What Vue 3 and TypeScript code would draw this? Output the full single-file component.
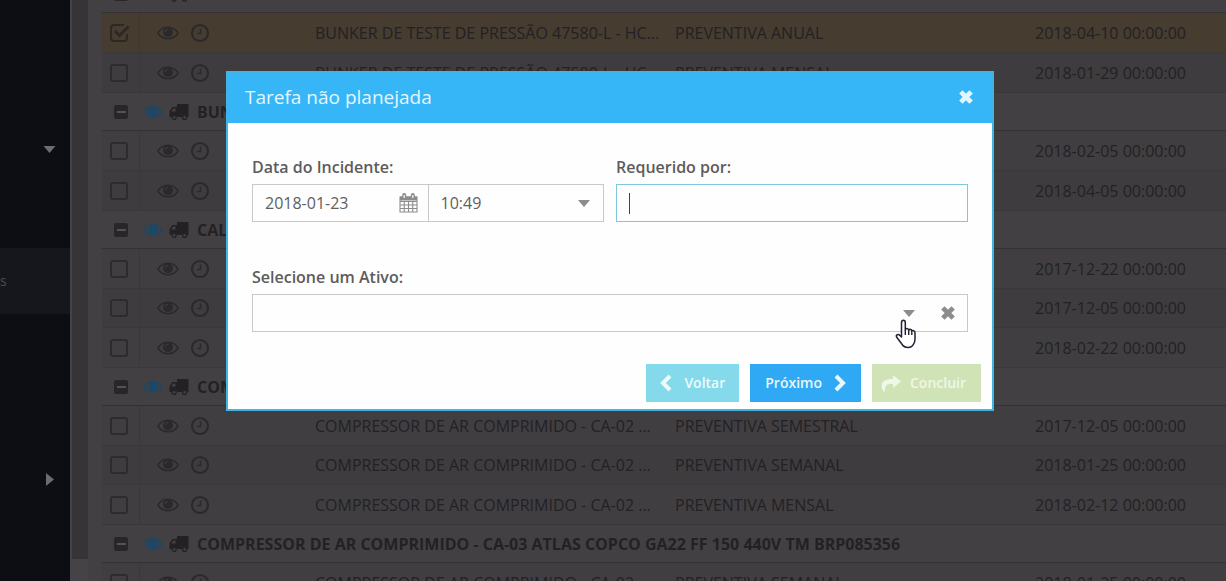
<script setup lang="ts">
import { onMounted, ref } from 'vue'

interface Task { id: number; name: string; type: string; date: string; checked: boolean }
interface Group { title: string; tasks: Task[] }

let nextId = 0
const task = (name: string, type: string, date: string, checked = false): Task => ({
  id: nextId++, name, type, date: `${date} 00:00:00`, checked,
})
const bunker = 'BUNKER DE TESTE DE PRESSÃO 47580-L - HC...'
const compressor = 'COMPRESSOR DE AR COMPRIMIDO - CA-02 ...'

const groups = ref<Group[]>([
  { title: '', tasks: [
    task(bunker, 'PREVENTIVA ANUAL', '2018-04-10', true),
    task(bunker, 'PREVENTIVA MENSAL', '2018-01-29'),
  ] },
  { title: 'BUN', tasks: [
    task('', '', '2018-02-05'),
    task('', '', '2018-04-05'),
  ] },
  { title: 'CAL', tasks: [
    task('', '', '2017-12-22'),
    task('', '', '2017-12-05'),
    task('', '', '2018-02-22'),
  ] },
  { title: 'COM', tasks: [
    task(compressor, 'PREVENTIVA SEMESTRAL', '2017-12-05'),
    task(compressor, 'PREVENTIVA SEMANAL', '2018-01-25'),
    task(compressor, 'PREVENTIVA MENSAL', '2018-02-12'),
  ] },
  { title: 'COMPRESSOR DE AR COMPRIMIDO - CA-03 ATLAS COPCO GA22 FF 150 440V TM BRP085356', tasks: [
    task(compressor, 'PREVENTIVA SEMANAL', '2018-01-25'),
  ] },
])

const date = ref('2018-01-23')
const time = ref('10:49')
const requester = ref('')
const asset = ref('')
const requesterInput = ref<HTMLInputElement | null>(null)
onMounted(() => requesterInput.value?.focus())
</script>

<template>
  <div class="page">
    <svg class="defs" aria-hidden="true">
      <symbol id="eye" viewBox="0 0 22 14">
        <path d="M1 7C5.500 -.6 16.500 -.6 21 7C16.500 14.600 5.500 14.600 1 7Z" fill="none" stroke="currentColor" stroke-width="1.500" />
        <circle cx="11" cy="6.300" r="5" fill="currentColor" />
        <path d="M8.300 6A2.800 2.800 0 0 1 11 3.300" fill="none" stroke="#413e41" stroke-width="1" />
      </symbol>
      <symbol id="clock" viewBox="0 0 20 20">
        <circle cx="10" cy="10" r="8" fill="none" stroke="currentColor" stroke-width="2.200" />
        <path d="M10.500 5.500V10.500H7" fill="none" stroke="currentColor" stroke-width="1.500" />
      </symbol>
      <symbol id="truck" viewBox="0 0 20 16">
        <path d="M8 0H19.500V13H18.300A2.700 2.700 0 0 0 13 13H7.800A2.700 2.700 0 0 0 2.500 13H.5V7L3.500 3H8ZM2.200 7.500H6.500V4.500H4.300Z" fill="currentColor" fill-rule="evenodd" />
        <circle cx="5.100" cy="13.400" r="2" fill="none" stroke="currentColor" stroke-width="1.200" />
        <circle cx="15.600" cy="13.400" r="2" fill="none" stroke="currentColor" stroke-width="1.200" />
      </symbol>
      <symbol id="cross" viewBox="0 0 14 14">
        <path d="M2.500 2.500L11.500 11.500M11.500 2.500L2.500 11.500" stroke="currentColor" stroke-width="4.200" />
      </symbol>
      <symbol id="down" viewBox="0 0 12 7"><path d="M0 0H12L6 7Z" fill="currentColor" /></symbol>
    </svg>

    <nav class="sidebar" aria-label="Menu">
      <button class="branch" type="button" aria-label="Recolher"><svg width="13" height="7"><use href="#down" /></svg></button>
      <a class="current" href="#">s</a>
      <button class="branch closed" type="button" aria-label="Expandir"><svg width="8" height="13" viewBox="0 0 8 13"><path d="M0 0L8 6.500L0 13Z" fill="currentColor" /></svg></button>
    </nav>
    <div class="gutter"><div class="thumb"></div></div>

    <main class="list">
      <table>
        <colgroup><col class="c-check"><col class="c-tools"><col class="c-name"><col class="c-type"><col></colgroup>
        <tbody v-for="(group, g) in groups" :key="g">
          <tr class="group">
            <td class="check"><button class="fold" type="button" aria-label="Recolher grupo"></button></td>
            <td colspan="4">
              <div class="heading">
                <svg class="seen" width="20" height="14"><use href="#eye" /></svg>
                <svg width="20" height="16"><use href="#truck" /></svg>
                <span>{{ group.title }}</span>
              </div>
            </td>
          </tr>
          <tr v-for="t in group.tasks" :key="t.id" :class="{ selected: t.checked }">
            <td class="check edge"><input v-model="t.checked" type="checkbox" :aria-label="t.date"></td>
            <td>
              <div class="tools">
                <svg width="22" height="14"><use href="#eye" /></svg>
                <svg width="20" height="20"><use href="#clock" /></svg>
              </div>
            </td>
            <td class="text">{{ t.name }}</td>
            <td class="text">{{ t.type }}</td>
            <td class="text">{{ t.date }}</td>
          </tr>
        </tbody>
      </table>
    </main>

    <div class="overlay">
      <section class="dialog" role="dialog" aria-labelledby="dialog-title">
        <header>
          <h2 id="dialog-title">Tarefa não planejada</h2>
          <button class="icon" type="button" aria-label="Fechar"><svg width="16" height="16"><use href="#cross" /></svg></button>
        </header>
        <form @submit.prevent>
          <div class="row">
            <div class="field">
              <label for="date">Data do Incidente:</label>
              <div class="pair">
                <div class="box">
                  <input id="date" v-model="date" type="text">
                  <button class="icon" type="button" aria-label="Calendário">
                    <svg width="19" height="20" viewBox="0 0 19 20">
                      <path d="M1 4H18V19H1ZM1 8.500H18M1 12H18M1 15.500H18M5.250 8V19M9.500 8V19M13.750 8V19" fill="none" stroke="currentColor" stroke-width="1.100" />
                      <path d="M1 3.500H18V7.500H1Z" fill="currentColor" />
                      <path d="M5.200 2V5M13.800 2V5" stroke="currentColor" stroke-width="4" stroke-linecap="round" />
                      <path d="M5.200 2V5M13.800 2V5" stroke="#fff" stroke-width="1.200" />
                    </svg>
                  </button>
                </div>
                <div class="box">
                  <select v-model="time" aria-label="Hora"><option>10:49</option></select>
                  <svg class="arrow" width="12" height="7"><use href="#down" /></svg>
                </div>
              </div>
            </div>
            <div class="field">
              <label for="requester">Requerido por:</label>
              <div class="box active"><input id="requester" ref="requesterInput" v-model="requester" type="text"></div>
            </div>
          </div>
          <div class="field">
            <label for="asset">Selecione um Ativo:</label>
            <div class="box combo">
              <input id="asset" v-model="asset" type="text">
              <button class="icon" type="button" aria-label="Abrir lista">
                <svg width="12" height="7"><use href="#down" /></svg>
                <svg class="pointer" width="22" height="30" viewBox="0 0 22 30" aria-hidden="true">
                  <path d="M6.500 18V3.500Q6.500 1.200 8.400 1.200T10.300 3.500V11Q10.500 9.500 12 9.500T13.700 11.500Q14 10 15.300 10.200T16.800 12.300Q17.200 11.200 18.600 11.700T20 14V20Q20 23 18.600 25Q17 28.500 13 28.500Q9 28.500 6.800 25L1.600 18Q.8 16.200 2.300 15.700T5 16.500Z" fill="#fff" stroke="#222230" stroke-width="1.500" stroke-linejoin="round" />
                  <path d="M10.300 11V16M13.700 11.500V16M16.800 12.500V16" stroke="#222230" stroke-width="1.400" />
                </svg>
              </button>
              <button class="icon" type="button" aria-label="Limpar"><svg width="16" height="16"><use href="#cross" /></svg></button>
            </div>
          </div>
          <footer>
            <button class="action back" type="button">
              <svg width="12" height="18" viewBox="0 0 12 18"><path d="M10 2L3 9L10 16" fill="none" stroke="currentColor" stroke-width="4" /></svg>
              Voltar
            </button>
            <button class="action next" type="button">
              Próximo
              <svg width="12" height="18" viewBox="0 0 12 18"><path d="M2 2L9 9L2 16" fill="none" stroke="currentColor" stroke-width="4" /></svg>
            </button>
            <button class="action finish" type="submit">
              <svg width="20" height="17" viewBox="0 0 20 17"><path d="M12 0L20 6.500L12 13V9C6 8.500 3.500 10 4 16.500H2.500C-1.500 9 1 3.800 12 4Z" fill="currentColor" /></svg>
              Concluir
            </button>
          </footer>
        </form>
      </section>
    </div>
  </div>
</template>

<style>
body { margin: 0; }
</style>

<style scoped>
* { box-sizing: border-box; }
.page {
  position: relative; display: flex; height: 100vh; overflow: hidden;
  background: #434043; color: #232124; font: 16px/20px "Open Sans", "Noto Sans", sans-serif;
}
.defs { position: absolute; width: 0; height: 0; }
button { padding: 0; border: 0; background: none; color: inherit; font: inherit; }
svg { display: block; flex: none; }

.sidebar { display: flex; flex: none; flex-direction: column; width: 70px; padding-top: 131px; background: #0d0e13; color: #6c6c70; }
.branch { display: flex; align-items: center; justify-content: flex-end; height: 37px; padding-right: 14px; }
.branch.closed { height: 40px; margin-top: 145px; padding-right: 16px; }
.current { height: 66px; margin-top: 80px; background: #15171c; color: #4a4b50; font-size: 14px; line-height: 66px; text-decoration: none; }
.gutter { flex: none; width: 18px; padding-left: 2px; background: #464347; }
.thumb { height: calc(100% - 22px); background: #363436; }

.list { flex: 1; min-width: 0; padding-left: 14px; }
table { width: 100%; margin-top: -25px; border-spacing: 0; table-layout: fixed; }
.c-check { width: 38px; }
.c-tools { width: 161px; }
.c-name { width: 360px; }
.c-type { width: 360px; }
tr { background: #413e41; }
tr:nth-child(odd) { background: #3f3c3f; }
tr.group { background: #434043; }
tr.selected { background: #463c30; }
td { height: 39px; padding: 0; border-bottom: 1px solid #3b383b; }
tr:nth-child(even) td, tr:last-child td { height: 40px; }
tr.group td { height: 38px; border-color: #343134; }
.text { padding-left: 14px; white-space: nowrap; }
.check { padding-left: 8px; }
.edge { border-right: 1px solid #3b383b; }
.check input {
  display: block; width: 18px; height: 18px; margin: 0; border: 2px solid #2d2b2e; border-radius: 3px; appearance: none;
}
.check input:checked {
  width: 21px; border: 0; border-radius: 0;
  background: no-repeat center / 21px 18px url("data:image/svg+xml,%3Csvg xmlns='http://www.w3.org/2000/svg' viewBox='0 0 21 18'%3E%3Cpath d='M17 10V14Q17 17 14 17H4Q1 17 1 14V4Q1 1 4 1H14' fill='none' stroke='%232e2823' stroke-width='2'/%3E%3Cpath d='M5 7L9.500 11.500L18.500 2.500' fill='none' stroke='%232e2823' stroke-width='3'/%3E%3C/svg%3E");
}
.fold { display: flex; align-items: center; justify-content: center; width: 14px; height: 14px; margin-left: 4px; border-radius: 2px; background: #282629; }
.fold::before { width: 9px; height: 2px; background: #555255; content: ""; }
.tools { display: flex; align-items: center; gap: 11px; padding-left: 17px; color: #2b292c; }
.heading { display: flex; align-items: center; gap: 6px; padding-left: 3px; font-weight: 700; white-space: nowrap; }
.heading span { margin-left: 2px; }
.seen { color: #15496d; }

.overlay { position: absolute; inset: 0; display: flex; align-items: flex-start; justify-content: center; padding: 71px 6px 0 0; }
.dialog { width: 768px; border: 2px solid #42b4e4; background: #fefefe; color: #555; }
header { display: flex; align-items: center; justify-content: space-between; height: 50px; padding: 0 18px 2px 17px; background: #37b6f7; color: #e2f6ff; }
h2 { margin: 0; font-size: 19px; font-weight: 400; line-height: 28px; }
form { padding: 33px 24px 7px; font-size: 16px; }
.row { display: grid; grid-template-columns: 1fr 1fr; gap: 12px; margin-bottom: 44px; }
label { display: block; margin-bottom: 6px; color: #5c5c5c; font-weight: 600; line-height: 22px; }
.pair { display: flex; }
.box { position: relative; display: flex; flex: 1; align-items: center; min-width: 0; height: 38px; padding-right: 10px; border: 1px solid #c8c8c8; color: #8c8c8c; }
.pair .box + .box { margin-left: -1px; }
.box.active { border-color: #7cc8de; }
.active::before { position: absolute; top: 8px; left: 12px; width: 1px; height: 21px; background: #444; content: ""; }
.active input { caret-color: transparent; }
.box input, .box select {
  flex: 1; width: 0; min-width: 0; height: 100%; padding: 0 12px; border: 0; outline: 0; background: transparent; color: #606060; font: inherit; appearance: none;
}
.arrow { margin-right: 3px; }
.combo { gap: 25px; padding-right: 11px; }
.pointer { position: absolute; top: 24px; right: 50px; }
footer { display: flex; justify-content: flex-end; gap: 11px; margin: 32px -13px 0 0; }
.action { display: flex; align-items: center; justify-content: center; gap: 12px; height: 38px; padding: 0 14px; color: #fff; font-size: 14px; font-weight: 600; }
.back { background: #84d9ea; color: #edfbff; }
.next { padding: 0 15px; background: #30a9f5; color: #e8f7ff; }
.finish { gap: 9px; padding: 0 15px 0 9px; background: #cfe3b6; color: #eff7e6; }
</style>
